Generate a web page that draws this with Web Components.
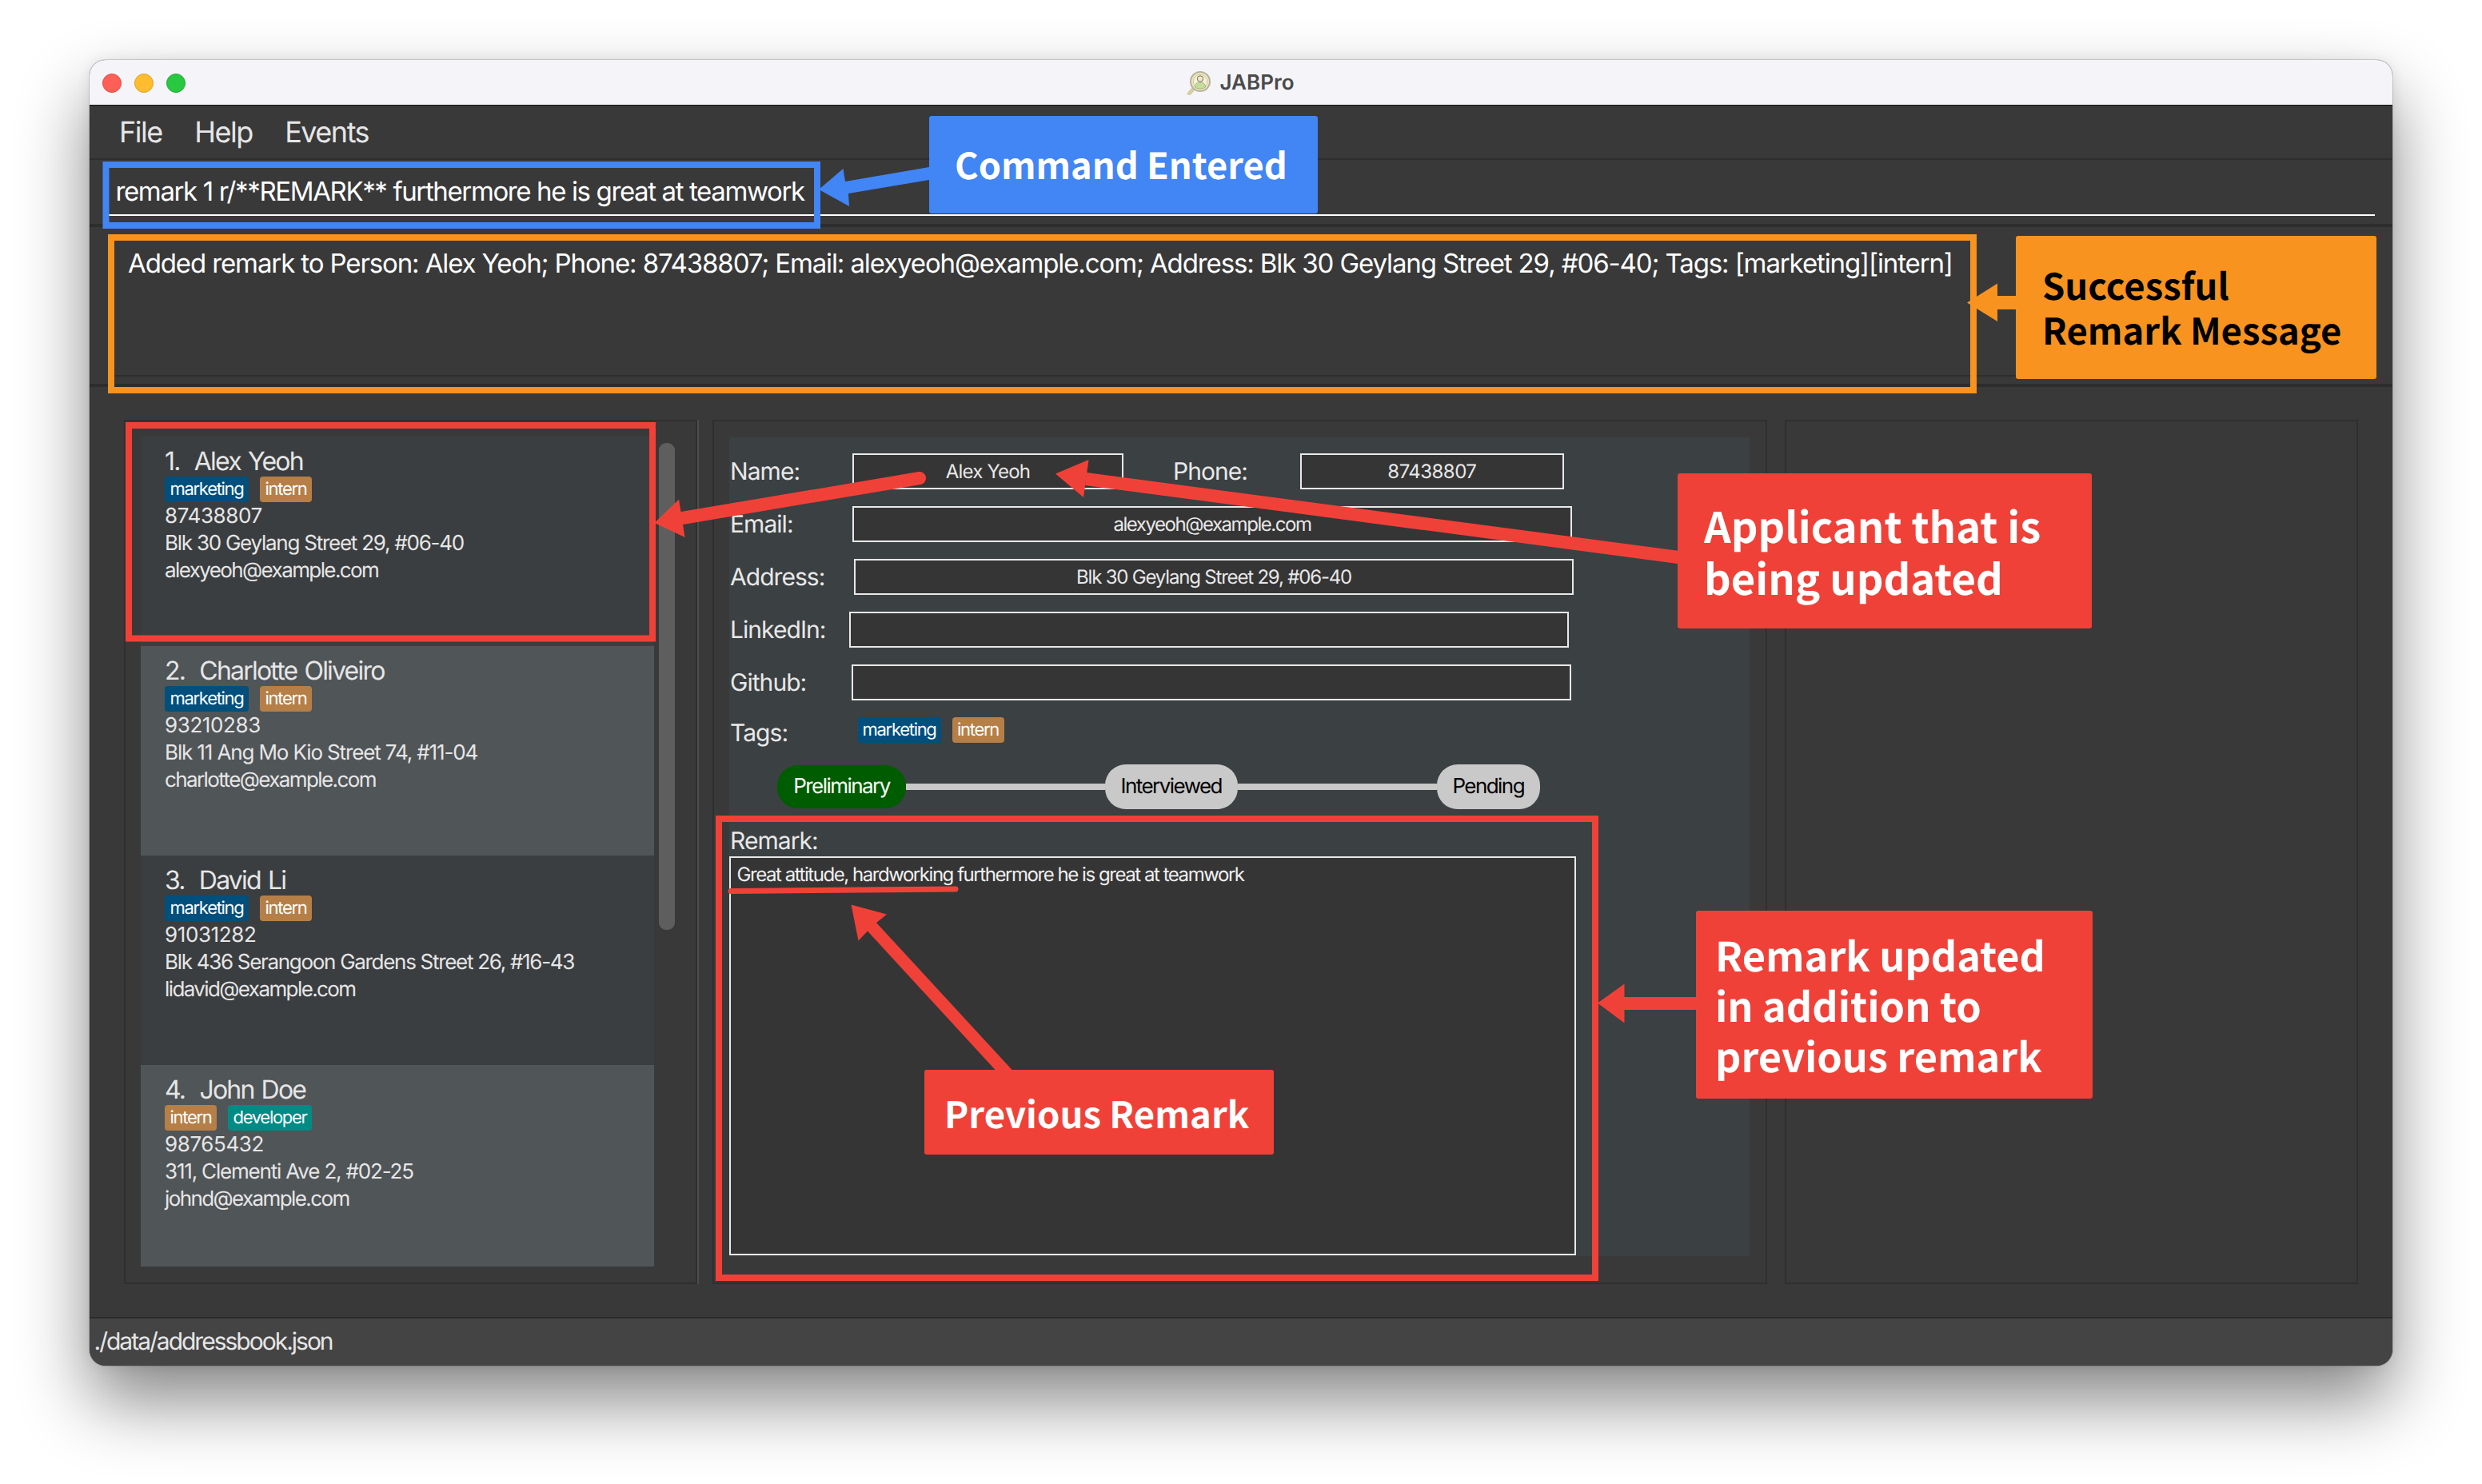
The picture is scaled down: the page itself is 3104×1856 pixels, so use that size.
<!doctype html>
<html lang="en"><head><meta charset="utf-8"><title>JABPro</title>
<style>
html,body{margin:0;background:#fff}
body{width:3104px;height:1856px;overflow:hidden;box-sizing:border-box;padding:75px 112px 0;position:relative;font-family:Inter,"Liberation Sans",sans-serif;text-rendering:geometricPrecision;color:#e8e8e8}
</style></head>
<body>
<app-window>
  <title-bar>JABPro</title-bar>
  <menu-bar><span>File</span><span>Help</span><span>Events</span></menu-bar>
  <command-bar>remark 1 r/**REMARK** furthermore he is great at teamwork</command-bar>
  <result-bar>Added remark to Person: Alex Yeoh; Phone: 87438807; Email: alexyeoh@example.com; Address: Blk 30 Geylang Street 29, #06-40; Tags: [marketing][intern]</result-bar>
  <main-area>
    <list-panel>
      <person-card index="1" name="Alex Yeoh" tags="marketing intern" phone="87438807" address="Blk 30 Geylang Street 29, #06-40" als="-1.25" email="alexyeoh@example.com"></person-card>
      <person-card alt index="2" name="Charlotte Oliveiro" tags="marketing intern" phone="93210283" address="Blk 11 Ang Mo Kio Street 74, #11-04" als="-1.13" email="charlotte@example.com"></person-card>
      <person-card index="3" name="David Li" tags="marketing intern" phone="91031282" address="Blk 436 Serangoon Gardens Street 26, #16-43" als="-1.3" email="lidavid@example.com"></person-card>
      <person-card alt index="4" name="John Doe" tags="intern developer" phone="98765432" address="311, Clementi Ave 2, #02-25" als="-1.18" email="johnd@example.com"></person-card>
    </list-panel>
    <pane-divider></pane-divider>
    <detail-panel>
      <field-row style="--label:153px;--w:339px;--ls:-.8px" label="Name:" value="Alex Yeoh">
        <field-row style="--label:158.7px;--w:330.3px;--ls:-.54px;margin-left:62px" label="Phone:" value="87438807"></field-row>
      </field-row>
      <field-row style="--label:153px;--w:900px;--ls:-1.46px" label="Email:" value="alexyeoh@example.com"></field-row>
      <field-row style="--label:155px;--w:900px;--ls:-1.19px" label="Address:" value="Blk 30 Geylang Street 29, #06-40"></field-row>
      <field-row style="--label:149px;--w:900px" label="LinkedIn:" value=""></field-row>
      <field-row style="--label:152px;--w:900px" label="Github:" value=""></field-row>
      <tags-row></tags-row>
      <stage-line></stage-line>
      <remark-box>Great attitude, hardworking furthermore he is great at teamwork</remark-box>
    </detail-panel>
    <side-panel></side-panel>
  </main-area>
  <status-bar>./data/addressbook.json</status-bar>
</app-window>
<annotation-layer>
  <call-out style="left:1161.5px;top:145px;width:486.5px;height:122px;--bg:#4285f4;--fs:45.2px;--lh:60px;--pt:30.5px;--pl:32.5px">Command Entered</call-out>
  <call-out style="left:2521px;top:295px;width:450.5px;height:178.5px;--bg:#f7931e;--fg:#000;--fs:45.4px;--lh:55.5px;--pt:34px;--pl:33px">Successful<br>Remark Message</call-out>
  <call-out style="left:2098px;top:592px;width:518px;height:194px;--bg:#f04139;--fs:52.5px;--lh:65px;--pt:33px;--pl:33px">Applicant that is<br>being updated</call-out>
  <call-out style="left:1156px;top:1338px;width:437px;height:106px;--bg:#f04139;--fs:45.5px;--lh:60px;--pt:23.8px;--pl:25px">Previous Remark</call-out>
  <call-out style="left:2120.5px;top:1139px;width:496.5px;height:234.5px;--bg:#f04139;--fs:50.4px;--lh:63px;--pt:22.8px;--pl:24.5px">Remark updated<br>in addition to<br>previous remark</call-out>
</annotation-layer>

<script>
function comp(name, css, html){
  customElements.define(name, class extends HTMLElement{
    connectedCallback(){
      if(this.shadowRoot) return;
      const r=this.attachShadow({mode:'open'});
      r.innerHTML='<style>'+css+'</style>'+(typeof html==='function'?html(this):html);
    }
  });
}
const TAGC={marketing:'#004f7c',intern:'#b67f47',developer:'#008b85'};
comp('tag-chip',`:host{display:block;height:32px;line-height:32px;padding:0 6.5px;border-radius:4px;font-size:22px;letter-spacing:-1.3px;color:#fff;white-space:nowrap;box-sizing:border-box;background:var(--c)}`,
  el=>{el.style.setProperty('--c',TAGC[el.getAttribute('kind')]);return '<slot></slot>'});
comp('app-window',`:host{display:block;width:2880px;height:1632.5px;border-radius:20px;box-shadow:0 44px 88px rgba(0,0,0,.48),0 0 16px rgba(0,0,0,.08),0 0 0 1px rgba(0,0,0,.14)}
  .w{display:flex;flex-direction:column;height:100%;overflow:hidden;border-radius:20px;background:#393939}`,'<div class="w"><slot></slot></div>');
comp('title-bar',`:host{display:flex;align-items:center;justify-content:center;position:relative;height:57px;flex:none;box-sizing:border-box;background:#f5f4f9;border-bottom:1px solid #111}
  .lights{position:absolute;left:16px;top:17px;display:flex;gap:16px}
  .lights i{display:block;width:24px;height:24px;border-radius:50%;box-sizing:border-box}
  .t{display:flex;align-items:center;gap:11px;font-weight:600;font-size:26px;letter-spacing:0;color:#4a4a4a;margin-left:-3px}
  svg{display:block;width:32px;height:32px;margin-top:1px}`,
  `<div class="lights"><i style="background:#ff5f57;border:1px solid #e5483f"></i><i style="background:#febc2e;border:1px solid #e0a024"></i><i style="background:#28c840;border:1px solid #1eac33"></i></div>
  <div class="t"><svg viewBox="0 0 32 32"><path d="M9.500 22.500 L3.500 29" stroke="#d8cf9a" stroke-width="4" stroke-linecap="round"/><path d="M9.500 22.500 L3.500 29" stroke="#a9a68a" stroke-width="0.800" stroke-linecap="round" transform="translate(1.600 1.600)"/>
  <circle cx="18" cy="14" r="12" fill="#efe7bb" stroke="#b5b39c" stroke-width="2"/><circle cx="18" cy="14" r="8.800" fill="#f5f1d4" stroke="#c9c7ae" stroke-width="1"/>
  <path d="M11.500 21 c0-4 2.500-6 6.500-6 s6.500 2 6.500 6 c-2 1.600-4 2-6.500 2 s-4.500-.400-6.500-2z" fill="#c5dd9c" stroke="#8ea276" stroke-width=".700"/><circle cx="18" cy="10.500" r="3.700" fill="#f3e7c8" stroke="#6f6f60" stroke-width="1"/></svg><slot></slot></div>`);
comp('menu-bar',`:host{display:flex;gap:40.5px;height:66px;flex:none;padding-left:37px;border-bottom:2px solid #2e2e2e;line-height:66px;font-size:36px;letter-spacing:-1.5px;color:#e6e6e6}`,'<slot></slot>');
comp('command-bar',`:host{display:block;flex:none;height:84px;box-sizing:border-box;border-bottom:4px solid #2d2d2d;padding:19px 22px 0 24px}
  .in{height:49px;border-bottom:2px solid #fff;padding-left:8.5px;font-size:33px;letter-spacing:-1.38px;line-height:40px;color:#fff;white-space:nowrap}`,'<div class="in"><slot></slot></div>');
comp('result-bar',`:host{display:block;flex:none;height:200px;box-sizing:border-box;border-bottom:4px solid #2d2d2d;padding:0 21px 0 24px}
  .in{height:187px;box-sizing:border-box;border-bottom:2px solid #2e2e2e;padding:25px 0 0 24px;font-size:33px;letter-spacing:-1.115px;line-height:40px;color:#fff;white-space:nowrap}`,'<div class="in"><slot></slot></div>');
comp('main-area',`:host{display:flex;align-items:stretch;flex:1;min-height:0;padding:41px 43px 41px 42.500px;box-sizing:border-box}`,'<slot></slot>');
comp('list-panel',`:host{display:flex;flex:none;width:717px;box-sizing:border-box;position:relative;border:2px solid #2f2f2f;padding:19px 0 19.500px 19.500px;gap:6px}
  .cards{width:642px;height:1037.500px;overflow:hidden;flex:none}
  .track{width:20px;flex:none;padding-top:8px}
  .thumb{height:609px;border-radius:9px;background:#5e5e5e}`,
  '<div class="cards"><slot></slot></div><div class="track"><div class="thumb"></div></div>');
comp('person-card',`:host{display:block;height:262px;box-sizing:border-box;padding:11px 0 0 30px;background:#3b3e40;color:#e6e6e6;font-size:26px}
  :host([alt]){background:#505558}
  .n{font-size:32px;line-height:40px;letter-spacing:-1.8px;word-spacing:1.9px;white-space:pre;height:40px}
  .tags{display:flex;gap:14px;margin:-1px 0 1px}
  .l{height:34px;line-height:34px;white-space:nowrap}`,
  el=>{const a=n=>el.getAttribute(n);return `<div class="n">${a('index')}.  ${a('name')}</div>
  <div class="tags">${a('tags').split(' ').map(t=>`<tag-chip kind="${t}">${t}</tag-chip>`).join('')}</div>
  <div class="l" style="letter-spacing:-.4px">${a('phone')}</div><div class="l" style="letter-spacing:${a('als')}px">${a('address')}</div><div class="l" style="letter-spacing:-1.6px">${a('email')}</div>`});
comp('pane-divider',`:host{display:block;flex:none;width:2px;background:#4d4d4d;margin-right:17.500px}`,'');
comp('detail-panel',`:host{display:block;flex:none;width:1318.500px;box-sizing:border-box;border:2px solid #2f2f2f;padding:19.500px 19.500px 0 18.500px}
  .in{height:1024px;box-sizing:border-box;background:#3b4042;padding:20.500px 0 0 1.500px;display:flex;flex-direction:column;gap:21px}`,'<div class="in"><slot></slot></div>');
comp('field-row',`:host{display:flex;height:45px;align-items:center;font-size:30px;letter-spacing:-.95px;color:#e8e8e8}
  .lab{width:var(--label);flex:none;white-space:nowrap}
  .box{width:var(--w);height:45px;flex:none;box-sizing:border-box;border:2px solid #e8e8e8;background:#353535;font-size:24px;letter-spacing:var(--ls,0);line-height:41px;text-align:center}`,
  el=>`<div class="lab">${el.getAttribute('label')}</div><div class="box">${el.getAttribute('value')}</div><slot></slot>`);
comp('tags-row',`:host{display:flex;align-items:flex-start;height:40px;font-size:30px;line-height:40px;letter-spacing:-.95px}
  .lab{width:159.600px;flex:none}.c{display:flex;gap:14px}`,
  `<div class="lab">Tags:</div><div class="c"><tag-chip kind="marketing" style="padding:0 6px">marketing</tag-chip><tag-chip kind="intern" style="padding:0 6.500px">intern</tag-chip></div>`);
comp('stage-line',`:host{display:flex;align-items:center;width:954px;height:56px;margin:-2.500px 0 0 59px;font-size:26px;letter-spacing:-1.55px}
  .p{flex:none;display:flex;align-items:center;justify-content:center;box-sizing:border-box;background:#c9c9c9;color:#000;height:56px;border-radius:26px}
  .p.on{background:#005c00;color:#fff;height:54px}
  .ln{flex:1;height:8px;background:#c9c9c9}`,
  `<div class="p on" style="width:161px">Preliminary</div><div class="ln"></div><div class="p" style="width:166.500px">Interviewed</div><div class="ln"></div><div class="p" style="width:129.500px">Pending</div>`);
comp('remark-box',`:host{display:block;margin-top:-1px;font-size:30px;letter-spacing:-.95px}
  .lab{height:39.500px;line-height:40px}
  .box{width:1059px;height:499px;margin-left:-1px;box-sizing:border-box;border:2px solid #e8e8e8;background:#353535;font-size:24px;letter-spacing:-1.45px;line-height:32px;padding:5px 0 0 7.500px;color:#f0f0f0}`,
  '<div class="lab">Remark:</div><div class="box"><slot></slot></div>');
comp('side-panel',`:host{display:block;flex:none;width:717.500px;margin-left:22px;box-sizing:border-box;border:2px solid #2f2f2f}`,'');
comp('status-bar',`:host{display:block;flex:none;height:60.500px;box-sizing:border-box;border-top:2px solid #2b2b2b;background:#444;padding-left:5.5px;font-size:30px;letter-spacing:-2px;line-height:58px;color:#e6e6e6}`,'<slot></slot>');
comp('call-out',`:host{position:absolute;box-sizing:border-box;display:block;border-radius:3px;background:var(--bg);color:var(--fg,#fff);font:700 var(--fs)/var(--lh) "Noto Sans CJK SC","Noto Sans",sans-serif;padding:var(--pt) 0 0 var(--pl);white-space:nowrap}`,'<slot></slot>');
comp('annotation-layer',`:host{position:absolute;left:0;top:0;width:3104px;height:1856px;display:block}
  svg{position:absolute;left:0;top:0}`,
  `<svg width="3104" height="1856" viewBox="0 0 3104 1856" fill="none">
    <rect x="132.500" y="206" width="889.500" height="76" stroke="#4285f4" stroke-width="8"/>
    <polygon points="1162,209 1057,227 1054.500,211 1024,237 1062,258 1061,242 1162,225" fill="#4285f4"/>
    <rect x="139" y="297" width="2329" height="191" stroke="#f7931e" stroke-width="8"/>
    <polygon points="2521,370 2498,370 2498,354.500 2460,378.500 2498,402 2498,387 2521,387" fill="#f7931e"/>
    <rect x="161" y="532" width="655" height="266.500" stroke="#f04139" stroke-width="8"/>
    <rect x="899" y="1024" width="1096" height="574" stroke="#f04139" stroke-width="8"/>
    <line x1="853" y1="648" x2="1150" y2="598" stroke="#f04139" stroke-width="16" stroke-linecap="round"/>
    <polygon points="818.500,654 849,624.500 856.500,672" fill="#f04139"/>
    <line x1="1358" y1="599" x2="2099" y2="697" stroke="#f04139" stroke-width="16"/>
    <polygon points="1320,592.500 1361.500,575 1355,622" fill="#f04139"/>
    <line x1="914" y1="1114.500" x2="1195" y2="1112" stroke="#f04139" stroke-width="7" stroke-linecap="round"/>
    <polygon points="1064.500,1131.500 1109,1143.500 1096,1154 1266.500,1339 1245.500,1339 1085,1164.500 1073.500,1176.500" fill="#f04139"/>
    <polygon points="2121,1247 2031.500,1247 2031.500,1230.500 1998,1254.500 2031.500,1279.500 2031.500,1263 2121,1263" fill="#f04139"/>
  </svg><slot></slot>`);
</script>
</body></html>
